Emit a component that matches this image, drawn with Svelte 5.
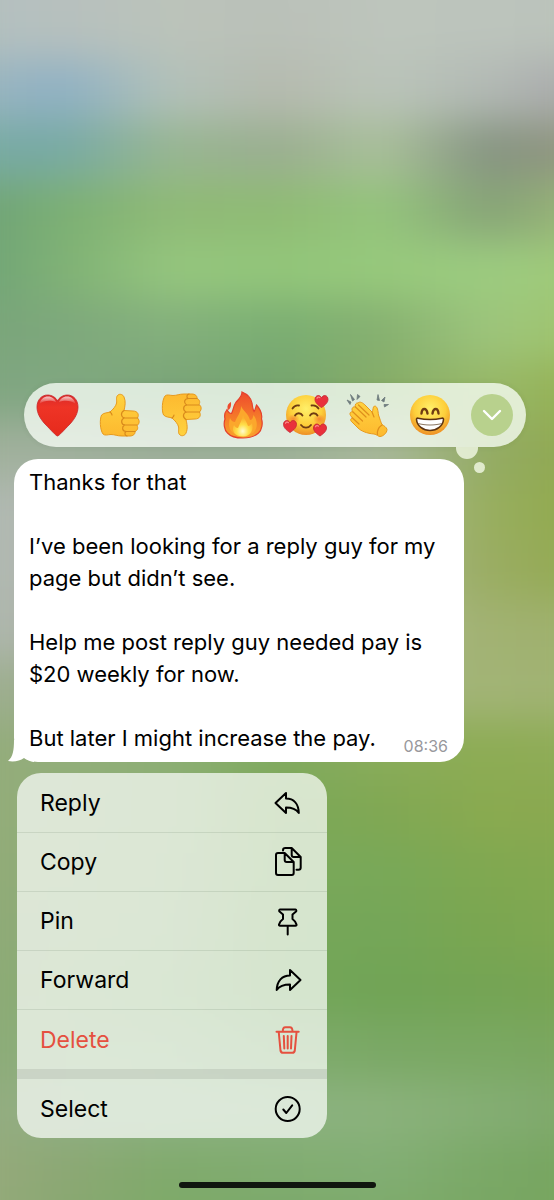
<script>
    // blurred wallpaper, one row of colours per horizontal band
    // first and last rows sit outside the screen so the blur has something to pull from
    const bands = [
        ["#b4c0c1", "#b8c1be", "#bcc3bb", "#bbc2ba", "#bdc5bd", "#bdc5bd", "#bbc3bc"],
        ["#b2bfc0", "#b6c0be", "#bbc3ba", "#bac0b8", "#bdc5bc", "#bcc4bc", "#bac2ba"],
        ["#9bb5bf", "#8fb1c4", "#b2c1b9", "#b5baae", "#bac4b9", "#b2b9b4", "#a8a7ab"],
        ["#78aba4", "#78aaa4", "#98b692", "#9aae90", "#a9c09a", "#869482", "#949680"],
        ["#6ca078", "#7cb074", "#8fba76", "#8fbb74", "#94c47c", "#86a377", "#9cb878"],
        ["#6ca078", "#80b275", "#95c67e", "#92c67a", "#97c97c", "#9ccc80", "#a0c878"],
        ["#78a47a", "#7ea87c", "#84b07c", "#7aae72", "#86b070", "#9dc57c", "#a0c46c"],
        ["#80a482", "#80a880", "#7aa478", "#74a46e", "#86ac66", "#98b868", "#94b050"],
        ["#a0b09c", "#a0b09c", "#9cae98", "#9cb098", "#a9b89c", "#93ab64", "#8fa84c"],
        ["#b3bab6", "#adb6ac", "#a9b5a8", "#a9b3a0", "#a9b894", "#98ae5e", "#8fa84a"],
        ["#b3b9b5", "#adb6ac", "#a9b5a8", "#a9b3a0", "#a9b690", "#9aad62", "#92a950"],
        ["#b1b8b2", "#a9b3a4", "#a5b39c", "#a5b294", "#a6b688", "#a2b272", "#9db06c"],
        ["#a0ad94", "#98ae88", "#94ae80", "#90ae78", "#a0b47a", "#a2b476", "#a0b272"],
        ["#94ab7c", "#92ae7a", "#8cae74", "#80aa60", "#8aac5a", "#8dac54", "#8fac58"],
        ["#94ab7b", "#90ae78", "#8cae74", "#7ca858", "#80a853", "#8aaa50", "#8aa850"],
        ["#92aa79", "#8fad77", "#8aac72", "#7aa85a", "#78a858", "#80a850", "#84a850"],
        ["#8fa978", "#8dac76", "#88ac72", "#76a658", "#74a658", "#7aa650", "#80a852"],
        ["#8daa77", "#8aac74", "#82ac6c", "#74a65a", "#70a455", "#74a454", "#78a452"],
        ["#8ca978", "#8cb07a", "#88b078", "#7eab6c", "#7aa865", "#7aa862", "#7ba65e"],
        ["#94aa7e", "#90b085", "#8db284", "#8cb280", "#8bb27c", "#84ae74", "#7ea768"],
        ["#98aa7e", "#8ca874", "#80aa6c", "#80ac70", "#82ae74", "#7aa866", "#76a45e"],
        ["#98aa7e", "#88a870", "#7ba966", "#7aa868", "#7caa68", "#78a662", "#76a45e"],
    ]

    const reactions = ["heart", "thumbs up", "thumbs down", "fire", "smiling with hearts", "clap", "grin"]

    const actions = ["Reply", "Copy", "Pin", "Forward", "Delete", "Select"]
</script>

{#snippet thumb()}
    <path d="M3.6 22C6 19.500 9.500 20 12 19C15 16.500 18 13 18.600 10C19 7 17.500 4 20 2C22 .5 25 1.500 26 4C28 8.500 27 13 26 17.500L35 18C39.500 18 41.500 21.500 39.500 25C42 27.500 41.500 31 39 32.500C40.500 35 39.500 37.500 37 38.500C37.500 41 35 43 32 43H24C19 43 17 41.500 13 41.500C10 41.500 7 43 5 41C2 37 1.500 26 3.600 22Z" fill="url(#skin)" stroke="#e79a1e"/>
    <path d="M26 17.500C22 20 23 24.500 27 25H39.500M26 25C22.500 27 23 31.500 27 32H39M26.500 32C23.500 34 24 38 28 38.500H37M28 38.500C26 40 27 42.500 29 43M12 19C13.500 20 14 21 14 22" fill="none" stroke="#d98a1c" stroke-width="1.200" stroke-linecap="round"/>
{/snippet}

{#snippet littleHeart()}
    <path d="M0 6C-4 3.500-6.500 .8-6.500-2C-6.500-6.500-1.500-7.500 0-3.500C1.500-7.500 6.500-6.500 6.500-2C6.500 .8 4 3.500 0 6Z" fill="#e9303c" stroke="#c22331" stroke-width=".8"/>
    <path d="M-4.500-3.200C-4-4.500-2.500-4.800-1.600-3.800" fill="none" stroke="#fb8b8b" stroke-width="1.200" stroke-linecap="round"/>
{/snippet}

<div class="screen">
    <div class="wallpaper" aria-hidden="true">
        {#each bands as band}
            <div class="band" style="background: linear-gradient(to right, {band.join(', ')})"></div>
        {/each}
    </div>

    <svg class="defs" width="0" height="0" aria-hidden="true">
        <defs>
            <linearGradient id="skin" x1="0" y1="0" x2="0" y2="1">
                <stop offset="0" stop-color="#ffd23f"/>
                <stop offset="1" stop-color="#fdb92f"/>
            </linearGradient>
            <radialGradient id="face" cx=".5" cy=".35" r=".65">
                <stop offset="0" stop-color="#fff06a"/>
                <stop offset=".6" stop-color="#fdcf3b"/>
                <stop offset="1" stop-color="#ee8f25"/>
            </radialGradient>
            <linearGradient id="red" x1="0" y1="0" x2="0" y2="1">
                <stop offset="0" stop-color="#d92a2a"/>
                <stop offset=".3" stop-color="#ee3426"/>
                <stop offset="1" stop-color="#e62a1c"/>
            </linearGradient>
            <linearGradient id="shine" x1="0" y1="0" x2="0" y2="1">
                <stop offset="0" stop-color="#fff" stop-opacity=".75"/>
                <stop offset="1" stop-color="#fff" stop-opacity="0"/>
            </linearGradient>
            <linearGradient id="flame" x1="0" y1="0" x2="0" y2="1">
                <stop offset="0" stop-color="#ee4a2c"/>
                <stop offset=".55" stop-color="#f57a2a"/>
                <stop offset="1" stop-color="#f9a22c"/>
            </linearGradient>
            <radialGradient id="core" cx=".5" cy=".75" r=".6">
                <stop offset="0" stop-color="#fffbd0"/>
                <stop offset=".5" stop-color="#ffe04a"/>
                <stop offset="1" stop-color="#fbb02e"/>
            </radialGradient>
            <radialGradient id="blush">
                <stop offset="0" stop-color="#f4672c" stop-opacity=".65"/>
                <stop offset="1" stop-color="#f4672c" stop-opacity="0"/>
            </radialGradient>
        </defs>
    </svg>

    <div class="reactions">
        {#each reactions as name}
            <button class="reaction" aria-label={name}>
                <svg class="emoji" viewBox="0 0 44 44">
                    {#if name === "heart"}
                        <path d="M21.500 43C20 43 15 37 9 31C4 25.500 1 20 1 14C1 7 5.500 2 11.500 2C16 2 20 4.500 21.500 8C23 4.500 27 2 31.500 2C37.500 2 42 7 42 14C42 20 39 25.500 34 31C28 37 23 43 21.500 43Z" fill="url(#red)" stroke="#c6242b" stroke-width=".8"/>
                        <path d="M3.500 11C4.500 6 8 3.500 12 3.500C16 3.500 19 6 20 9C15 7 8 7 3.500 11ZM39.500 11C38.500 6 35 3.500 31 3.500C27 3.500 24 6 23 9C28 7 35 7 39.500 11Z" fill="url(#shine)"/>
                    {:else if name === "thumbs up"}
                        {@render thumb()}
                    {:else if name === "thumbs down"}
                        <g transform="translate(0 44) scale(1 -1)">{@render thumb()}</g>
                    {:else if name === "fire"}
                        <path d="M20-1C25 1 29 5 30 10C30.500 14 31 17 32 18.500C33.500 17 33.500 14.500 34.500 12C39 17 40.500 21 39.500 26C41 30 40 37 36.500 40C32 44 26 45 21 45C15 45 9 44 5.500 40C2 37 1.500 30 3 26C2 22 3 19 5 16.500C6 19 7.500 20.500 9.500 20.500C11.500 17 11 14 13.500 10C16 6.500 20 4 20-1Z" fill="url(#flame)" stroke="#e5402d" stroke-width="1.200"/>
                        <path d="M9 9C9 12 9.500 14 6.500 17C4.500 14 5.500 11 9 9Z" fill="#ee4a2c"/>
                        <path d="M19 13C21 18 26 20 28 27C30 27 31 25 31.500 22C36 28 36 36 31 40C26 44 16 44 11 40C6 36 6.500 30 8 25C9.500 28 11 29 13 29C15 23 19 20 19 13Z" fill="#fba72c"/>
                        <path d="M21 22C22 26 25 29 26 33C28 33 29 31.500 30 30C32 36 29 43.500 21 43.500C12 43.500 9 37 12 32C13 34 14 35 16 35C18 30 20 27 21 22Z" fill="url(#core)"/>
                    {:else if name === "smiling with hearts"}
                        <circle cx="22" cy="22" r="20" fill="url(#face)"/>
                        <ellipse cx="9.500" cy="26" rx="6" ry="5" fill="url(#blush)"/>
                        <ellipse cx="35" cy="26" rx="6" ry="5" fill="url(#blush)"/>
                        <path d="M8.500 15.500C10 13 12.500 12 15 12.500M27.500 12.500C30.500 12 33 13 34.500 15.500M11 22.500C12.500 19.500 17 19.500 18.500 22.500M26 22.500C27.500 19.500 32 19.500 33.500 22.500M17 32C19.500 35.500 24.500 35.500 27 32" fill="none" stroke="#6f3c12" stroke-width="1.800" stroke-linecap="round"/>
                        <g transform="translate(37.500 8.500)">{@render littleHeart()}</g>
                        <g transform="translate(6 33.500)">{@render littleHeart()}</g>
                        <g transform="translate(36 37)">{@render littleHeart()}</g>
                    {:else if name === "clap"}
                        <path d="M1 7L5 9L4 11.500ZM4.500 1.500L8.500 6.500L6.500 8ZM11.500 1.500L14 3.500L11 6.500ZM32 1.500L33.500 7.500L31 7ZM39 4L38 9L35.500 7.500ZM42.500 11.500L38.500 14L38 11.500Z" fill="#6f7c7e" stroke="#6f7c7e" stroke-width=".8" stroke-linejoin="round"/>
                        <path d="M12 10C14 8 17 10 19 12L26 19C27.500 17 26.500 14 28.500 13C31.500 13 32 18 32.500 22C34 26 35 30 36 31.500C38 33 40.500 34 41 36.500C41 40 37 43.500 34 43.500C32 43.500 31 41.500 28 41C21 40.500 15 38 12 35L6 29C3.500 27 5 25 6.500 25L4.500 22.500C3 20 5 18 7 19C4.500 16 7 13 9.500 14C8.500 12 10 9.500 12 10Z" fill="url(#skin)" stroke="#e79a1e"/>
                        <path d="M9.500 14L20 24M7 19L16.500 28M6.500 25L13 31M12.500 12L23 22M26 19L28 24M36 32C33 34 31 38 31.500 41.500" fill="none" stroke="#df8f1c" stroke-width="1.200" stroke-linecap="round"/>
                    {:else}
                        <circle cx="22" cy="22" r="20" fill="url(#face)"/>
                        <path d="M13.500 20.500C14 14.500 18.500 14.500 19.500 20.500M24.500 20.500C25.500 14.500 30 14.500 30.500 20.500" fill="none" stroke="#6f3c12" stroke-width="2.400" stroke-linecap="round"/>
                        <path d="M8.500 26.500C8.500 25.500 9 25 10 25.200C18 27 26 27 34 25.200C35 25 35.500 25.500 35.500 26.500C35 33 29 37.500 22 37.500C15 37.500 9 33 8.500 26.500Z" fill="#fff" stroke="#5e3312" stroke-width="1.600"/>
                        <path d="M10 30.500C18 32.500 26 32.500 34 30.500" fill="none" stroke="#8b7660" stroke-width="1"/>
                    {/if}
                </svg>
            </button>
        {/each}
        <div class="slot">
            <button class="more" aria-label="More reactions">
                <svg width="20" height="12" viewBox="0 0 20 12" fill="none" stroke="#fff" stroke-width="2.400" stroke-linecap="round" stroke-linejoin="round">
                    <path d="M2 2L10 10L18 2"/>
                </svg>
            </button>
        </div>
        <span class="puff"></span>
        <span class="dot"></span>
    </div>

    <article class="message">
        <p>Thanks for that</p>
        <p>I’ve been looking for a reply guy for my page but didn’t see.</p>
        <p>Help me post reply guy needed pay is $20 weekly for now.</p>
        <p>But later I might increase the pay.</p>
        <time class="time">08:36</time>
        <svg class="tail" width="26" height="22" viewBox="0 0 26 22">
            <path d="M6 0C6 10 5 17 0 21C6 22 12 21 16 18C19 20 22 21.500 26 22V0Z" fill="#fff"/>
        </svg>
    </article>

    <div class="menu">
        {#each actions as action}
            <button class="item" class:danger={action === "Delete"} class:last={action === "Select"}>
                <span>{action}</span>
                <svg class="icon" viewBox="0 0 32 32">
                    {#if action === "Reply"}
                        <path d="M3.500 16L14 6V11.500C22 11.500 26.500 17 26.800 26C24 22 20 20.500 14 20.500V26Z"/>
                    {:else if action === "Copy"}
                        <path d="M6 7H12.700L21.700 16V27C21.700 28.200 21 29 19.700 29H6C4.700 29 4 28.200 4 27V9C4 7.700 4.700 7 6 7ZM12.700 7V14C12.700 15.300 13.400 16 14.700 16H21.700"/>
                        <path d="M11 4.500C11 2.700 11.700 2 13.500 2H19.700L28.700 11V21.500C28.700 23 28 23.700 26.500 23.700H24.500M19.700 2V9C19.700 10.300 20.400 11 21.700 11H28.700"/>
                    {:else if action === "Pin"}
                        <path d="M8 4.500H23.500C24.500 4.500 24.500 6 24 6.500L20.500 9.500V14C22.500 15.500 24 17 24.500 19.500C24.600 20.300 24.300 20.800 23.500 20.800H8C7.200 20.800 6.900 20.300 7 19.500C7.500 17 9 15.500 11 14V9.500L7.500 6.500C7 6 7 4.500 8 4.500ZM15.700 21V29.500"/>
                    {:else if action === "Forward"}
                        <path d="M28.500 16L18 6V11.500C10 11.500 5 17 4.700 26C7.500 22 12 20.500 18 20.500V26Z"/>
                    {:else if action === "Delete"}
                        <path d="M4.500 7.700H26.700M6.700 7.700L8.500 26.500C8.700 28 9.500 28.700 11 28.700H20.300C21.800 28.700 22.600 28 22.800 26.500L24.600 7.700M10.800 7.500C10.800 4.500 11.500 3.300 13.500 3.300H17.800C19.800 3.300 20.500 4.500 20.500 7.500M11.800 12L12.300 24.500M15.700 12V24.500M19.500 12L19 24.500"/>
                    {:else}
                        <circle cx="15.700" cy="16" r="12"/>
                        <path d="M11.300 16.500L14.300 20L20.200 12.300"/>
                    {/if}
                </svg>
            </button>
        {/each}
    </div>

    <div class="home-bar"></div>
</div>

<style>
    :global(body) {
        margin: 0;
    }

    .screen {
        position: relative;
        display: flex;
        flex-direction: column;
        align-items: flex-start;

        box-sizing: border-box;
        min-height: 100vh;
        padding: 383px 28px 12px 14px;
        overflow: hidden;

        font-family: Inter, "Liberation Sans", sans-serif;
        color: #000;
        background: #8fae78;
    }

    .wallpaper {
        position: absolute;
        inset: -60px -40px;
        display: flex;
        flex-direction: column;
        filter: blur(20px);
    }

    .band {
        flex: 1;
    }

    .defs {
        position: absolute;
    }

    button {
        margin: 0;
        padding: 0;
        border: none;
        background: none;
        font: inherit;
        color: inherit;
    }

    .reactions {
        position: relative;
        display: flex;
        align-self: stretch;

        height: 64px;
        margin-left: 10px;
        padding: 0 3px;

        border-radius: 32px;
        background: rgba(250, 255, 248, 0.76);
        box-shadow: 0 0 6px rgba(0, 0, 0, 0.06);
    }

    .reaction,
    .slot {
        flex: 1;
        display: flex;
        align-items: center;
        justify-content: center;
    }

    .emoji {
        width: 44px;
        height: 44px;
        overflow: visible;
    }

    .more {
        display: flex;
        align-items: center;
        justify-content: center;

        width: 42px;
        height: 42px;
        border-radius: 50%;
        background: #b8d18d;
    }

    .puff {
        position: absolute;
        top: 64px;
        right: 48px;
        width: 22px;
        height: 12px;
        border-radius: 0 0 11px 11px;
        background: rgba(250, 255, 240, 0.74);
    }

    .dot {
        position: absolute;
        top: 79px;
        right: 41px;
        width: 11px;
        height: 11px;
        border-radius: 50%;
        background: rgba(250, 255, 240, 0.74);
    }

    .message {
        position: relative;
        isolation: isolate;
        box-sizing: border-box;
        width: 100%;
        max-width: 450px;
        margin-top: 12px;
        padding: 7px 15px 8px;

        font-size: 22px;
        line-height: 32px;

        border-radius: 24px;
        background: #fff;
    }

    .message p {
        margin: 0 0 32px;
    }

    .message p:last-of-type {
        margin: 0;
    }

    .time {
        position: absolute;
        right: 16px;
        bottom: 6px;
        font-size: 16px;
        line-height: 20px;
        color: #98989c;
    }

    .tail {
        position: absolute;
        z-index: -1;
        left: -6px;
        bottom: 0;
    }

    .menu {
        position: relative;
        display: flex;
        flex-direction: column;

        width: 310px;
        margin: 11px 0 0 3px;
        padding-top: 1px;
        overflow: hidden;

        border-radius: 24px;
        background: rgba(250, 252, 250, 0.73);
    }

    .item {
        display: flex;
        align-items: center;
        justify-content: space-between;

        box-sizing: border-box;
        height: 59px;
        padding: 0 23px;

        font-size: 23px;
        line-height: 32px;
        border-bottom: 1px solid rgba(60, 80, 60, 0.12);
    }

    .danger {
        height: 69px;
        color: #e5503f;
        border-bottom: 10px solid rgba(90, 100, 90, 0.14);
    }

    .last {
        border-bottom: none;
    }

    .icon {
        width: 32px;
        height: 32px;
        fill: none;
        stroke: currentColor;
        stroke-width: 2;
        stroke-linecap: round;
        stroke-linejoin: round;
    }

    .home-bar {
        position: relative;
        align-self: center;
        width: 197px;
        height: 6px;
        margin-top: auto;
        margin-left: 14px;
        border-radius: 3px;
        background: #10160f;
    }
</style>
